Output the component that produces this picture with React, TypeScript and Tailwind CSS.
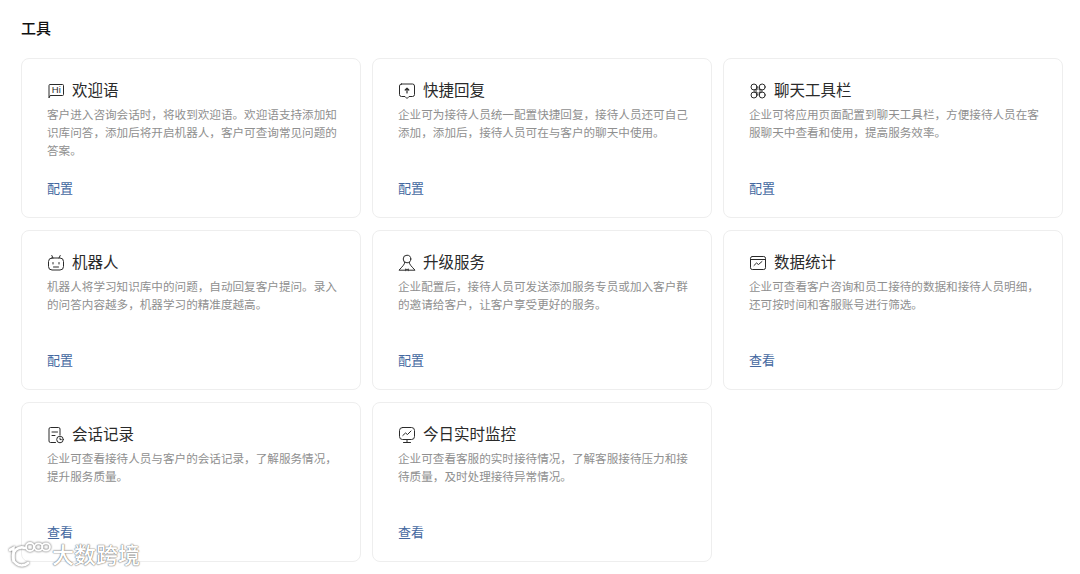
import type { ReactNode } from 'react';

type Tool = {
  title: string;
  desc: string;
  link: string;
  icon: ReactNode;
};

const iconProps = {
  width: 18,
  height: 18,
  viewBox: '0 0 18 18',
  fill: 'none',
  stroke: '#2a2a2a',
  strokeWidth: 1,
  strokeLinecap: 'round' as const,
  strokeLinejoin: 'round' as const,
};

const tools: Tool[] = [
  {
    title: '欢迎语',
    desc: '客户进入咨询会话时，将收到欢迎语。欢迎语支持添加知识库问答，添加后将开启机器人，客户可查询常见问题的答案。',
    link: '配置',
    icon: (
      <svg {...iconProps}>
        <path d="M2 15.500V3.500a1 1 0 0 1 1-1h12.500a1 1 0 0 1 1 1v9a1 1 0 0 1-1 1H3.500z" />
        <text x="9.300" y="11.300" textAnchor="middle" fontSize="9.500" fill="#2a2a2a" stroke="none" fontFamily="Liberation Sans, sans-serif">
          Hi
        </text>
      </svg>
    ),
  },
  {
    title: '快捷回复',
    desc: '企业可为接待人员统一配置快捷回复，接待人员还可自己添加，添加后，接待人员可在与客户的聊天中使用。',
    link: '配置',
    icon: (
      <svg {...iconProps}>
        <path d="M3.500 2h11a2 2 0 0 1 2 2v8.500a2 2 0 0 1-2 2h-3.500L9 16.500l-2-2H3.500a2 2 0 0 1-2-2V4a2 2 0 0 1 2-2z" />
        <path d="M9 11V6.200M7.200 8 9 6.200 10.800 8" strokeWidth={1.200} />
      </svg>
    ),
  },
  {
    title: '聊天工具栏',
    desc: '企业可将应用页面配置到聊天工具栏，方便接待人员在客服聊天中查看和使用，提高服务效率。',
    link: '配置',
    icon: (
      <svg {...iconProps}>
        <circle cx="5" cy="5" r="3" />
        <circle cx="13.200" cy="5" r="3" />
        <circle cx="5" cy="13" r="3" />
        <circle cx="13.200" cy="13" r="3" />
        <path d="M5 8h3V5M13.200 8h-3V5M5 10h3v3M13.200 10h-3v3" />
      </svg>
    ),
  },
  {
    title: '机器人',
    desc: '机器人将学习知识库中的问题，自动回复客户提问。录入的问答内容越多，机器学习的精准度越高。',
    link: '配置',
    icon: (
      <svg {...iconProps}>
        <rect x="1.500" y="4" width="15" height="12" rx="3.500" />
        <path d="M6 4 4.800 1.500M12 4l1.200-2.500M6 8.500v1.500M12 8.500v1.500M6.500 13h5" />
      </svg>
    ),
  },
  {
    title: '升级服务',
    desc: '企业配置后，接待人员可发送添加服务专员或加入客户群的邀请给客户，让客户享受更好的服务。',
    link: '配置',
    icon: (
      <svg {...iconProps}>
        <circle cx="9" cy="5" r="3.800" />
        <path d="M6.800 8.200c0 2.500-2.800 4.500-5.800 8h6M11.200 8.200c0 2.500 2.800 4.500 5.800 8h-6" />
        <path d="M7.800 15.200v1.400M10.200 15.200v1.400M7.800 15.900h2.400" strokeWidth={1.300} />
      </svg>
    ),
  },
  {
    title: '数据统计',
    desc: '企业可查看客户咨询和员工接待的数据和接待人员明细，还可按时间和客服账号进行筛选。',
    link: '查看',
    icon: (
      <svg {...iconProps}>
        <rect x="1.500" y="2.500" width="15" height="13" rx="1.800" />
        <path d="M2 5.500h14" />
        <path d="M5 11.500 7.500 9l2 1.500 3.500-3" />
      </svg>
    ),
  },
  {
    title: '会话记录',
    desc: '企业可查看接待人员与客户的会话记录，了解服务情况，提升服务质量。',
    link: '查看',
    icon: (
      <svg {...iconProps}>
        <path d="M8.500 16.500h-5A1.500 1.500 0 0 1 2 15V3a1.500 1.500 0 0 1 1.500-1.500h8A1.500 1.500 0 0 1 13 3v6" />
        <path d="M5 6h5.500M5 9.500h3" />
        <circle cx="13" cy="13.500" r="3.300" />
        <path d="M13 12v1.600h1.300" />
      </svg>
    ),
  },
  {
    title: '今日实时监控',
    desc: '企业可查看客服的实时接待情况，了解客服接待压力和接待质量，及时处理接待异常情况。',
    link: '查看',
    icon: (
      <svg {...iconProps}>
        <rect x="1.500" y="1.500" width="15" height="12" rx="3" />
        <path d="M4.800 9.500 7.500 7l2 1.500L13 5M9 13.500v3M5.500 16.500h7" />
      </svg>
    ),
  },
];

function ToolCard({ tool }: { tool: Tool }) {
  return (
    <div className="flex h-[160px] flex-col rounded-lg border border-[#eeeeee] bg-white px-[25px] pt-[22px]">
      <div className="flex h-5 items-center gap-[7px]">
        {tool.icon}
        <span className="text-[15.500px] leading-5 text-[#2a2a2a]">{tool.title}</span>
      </div>
      <p className="mt-[4.500px] w-[294px] text-[11.600px] leading-[18px] text-[#8f8f8f]">{tool.desc}</p>
      <a className="mt-auto mb-[19px] text-[13px] leading-[18px] text-[#44689f]">{tool.link}</a>
    </div>
  );
}

export default function App() {
  return (
    <div className="relative h-[574px] w-[1080px] overflow-hidden bg-white px-[21px] pt-[18px] font-['Liberation_Sans','Noto_Sans_CJK_SC',sans-serif]">
      <h2 className="mb-[19px] text-[15px] leading-[21px] font-medium text-[#111]">工具</h2>
      <div className="grid w-[1042px] grid-cols-3 gap-x-[11px] gap-y-3">
        {tools.map((tool) => (
          <ToolCard key={tool.title} tool={tool} />
        ))}
      </div>
      {/* 水印 */}
      <div className="absolute bottom-[6px] left-[9px] flex items-end gap-[1px]">
        <svg width="42" height="28" viewBox="0 0 42 28" fill="none" stroke="#fff" strokeWidth="2.600" style={{ filter: 'drop-shadow(0 0 1px #555)' }}>
          <path d="M1 10l3.500-2v13" strokeLinecap="round" />
          <path d="M16 8a9 9 0 1 0 3 15" strokeLinecap="round" />
          <circle cx="21" cy="7" r="4" strokeWidth="1.800" />
          <ellipse cx="29.500" cy="7" rx="4" ry="3.600" strokeWidth="1.800" />
          <ellipse cx="37" cy="7" rx="4" ry="3.600" strokeWidth="1.800" />
        </svg>
        <span className="text-[22px] leading-6 font-medium text-white [text-shadow:0_0_1.500px_#666,0_0_1px_#666]">
          大数跨境
        </span>
      </div>
    </div>
  );
}
